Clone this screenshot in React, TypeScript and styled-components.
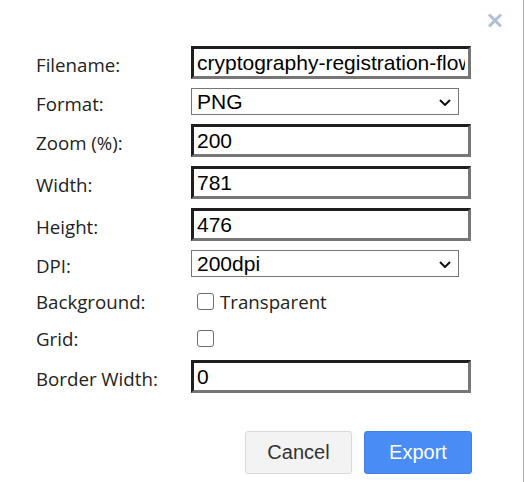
import React from "react";
import styled, { createGlobalStyle } from "styled-components";

const Global = createGlobalStyle`
  html, body { margin: 0; padding: 0; background: #fff; }
  body { width: 525px; height: 482px; overflow: hidden; }
`;

const Dialog = styled.div`
  position: relative;
  box-sizing: border-box;
  width: 524px;
  height: 482px;
  border-right: 1px solid #a9a9a9;
  background: #fff;
  padding: 46px 0 0 36px;
`;

const Close = styled.button`
  position: absolute;
  top: 13px;
  right: 20px;
  width: 16px;
  height: 15px;
  padding: 0;
  border: 0;
  background: none;
  display: flex;
`;

const Form = styled.div`
  display: grid;
  grid-template-columns: 155px 280px;
  row-gap: 9px;
  align-items: center;
`;

const Label = styled.label<{ $h: number }>`
  height: ${(p) => p.$h}px;
  display: flex;
  align-items: center;
  padding-top: 3px;
  box-sizing: border-box;
  font-family: "Open Sans", "Noto Sans", sans-serif;
  font-size: 18.7px;
  color: #222;
  white-space: nowrap;
`;

const TextInput = styled.input`
  box-sizing: border-box;
  width: 280px;
  height: 33px;
  margin: 0;
  padding: 0 3px;
  border-style: solid;
  border-width: 3px;
  border-color: #1e1e1e #767676 #767676 #1e1e1e;
  font-family: "Liberation Sans", Arial, sans-serif;
  font-size: 21px;
  color: #000;
  background: #fff;
  outline: none;
`;

const SelectWrap = styled.div`
  position: relative;
  width: 268px;
  height: 27px;
`;

const Select = styled.select`
  appearance: none;
  -webkit-appearance: none;
  box-sizing: border-box;
  width: 268px;
  height: 27px;
  margin: 0;
  padding: 0 0 0 5px;
  border: 1px solid #767676;
  border-radius: 0;
  background: #fff;
  font-family: "Liberation Sans", Arial, sans-serif;
  font-size: 21px;
  color: #000;
  outline: none;
`;

const Chevron = styled.svg`
  position: absolute;
  right: 8px;
  top: 11px;
  pointer-events: none;
`;

const CheckRow = styled.div`
  height: 28px;
  display: flex;
  align-items: center;
  padding-top: 2px;
  box-sizing: border-box;
`;

const Check = styled.input`
  appearance: none;
  -webkit-appearance: none;
  box-sizing: border-box;
  width: 17px;
  height: 17px;
  margin: 0 6px 0 6px;
  border: 1px solid #6f6f6f;
  border-radius: 3px;
  background: #fff;
`;

const CheckText = styled.span`
  font-family: "Open Sans", "Noto Sans", sans-serif;
  font-size: 18.7px;
  color: #222;
`;

const Footer = styled.div`
  display: flex;
  justify-content: flex-end;
  gap: 12px;
  margin-top: 38px;
  padding-right: 51px;
`;

const Button = styled.button<{ $primary?: boolean }>`
  box-sizing: border-box;
  width: ${(p) => (p.$primary ? 108 : 107)}px;
  height: 43px;
  border-radius: 3px;
  border: 1px solid ${(p) => (p.$primary ? "#3f7fe6" : "#d9d9d9")};
  background: ${(p) => (p.$primary ? "#4a8cf5" : "#f3f3f3")};
  color: ${(p) => (p.$primary ? "#fff" : "#333")};
  font-family: "Liberation Sans", Arial, sans-serif;
  font-size: 20px;
  padding: 0;
`;

function Dropdown({ value, options }: { value: string; options: string[] }) {
  return (
    <SelectWrap>
      <Select defaultValue={value}>
        {options.map((o) => (
          <option key={o}>{o}</option>
        ))}
      </Select>
      <Chevron width="12" height="7" viewBox="0 0 12 7">
        <path d="M1 1l5 5 5-5" fill="none" stroke="#111" strokeWidth="2" />
      </Chevron>
    </SelectWrap>
  );
}

export default function App() {
  return (
    <>
      <Global />
      <Dialog>
        <Close aria-label="Close">
          <svg width="16" height="15" viewBox="0 0 16 15">
            <path d="M2 1.5l12 12M14 1.5l-12 12" stroke="#afc0d6" strokeWidth="3" />
          </svg>
        </Close>
        <Form>
          <Label $h={33}>Filename:</Label>
          <TextInput defaultValue="cryptography-registration-flow" />
          <Label $h={27}>Format:</Label>
          <Dropdown value="PNG" options={["PNG", "JPEG", "SVG", "PDF"]} />
          <Label $h={33}>Zoom (%):</Label>
          <TextInput defaultValue="200" />
          <Label $h={33}>Width:</Label>
          <TextInput defaultValue="781" />
          <Label $h={33}>Height:</Label>
          <TextInput defaultValue="476" />
          <Label $h={27}>DPI:</Label>
          <Dropdown value="200dpi" options={["100dpi", "200dpi", "300dpi"]} />
          <Label $h={28}>Background:</Label>
          <CheckRow>
            <Check type="checkbox" />
            <CheckText>Transparent</CheckText>
          </CheckRow>
          <Label $h={28}>Grid:</Label>
          <CheckRow>
            <Check type="checkbox" />
          </CheckRow>
          <Label $h={33}>Border Width:</Label>
          <TextInput defaultValue="0" />
        </Form>
        <Footer>
          <Button>Cancel</Button>
          <Button $primary>Export</Button>
        </Footer>
      </Dialog>
    </>
  );
}
